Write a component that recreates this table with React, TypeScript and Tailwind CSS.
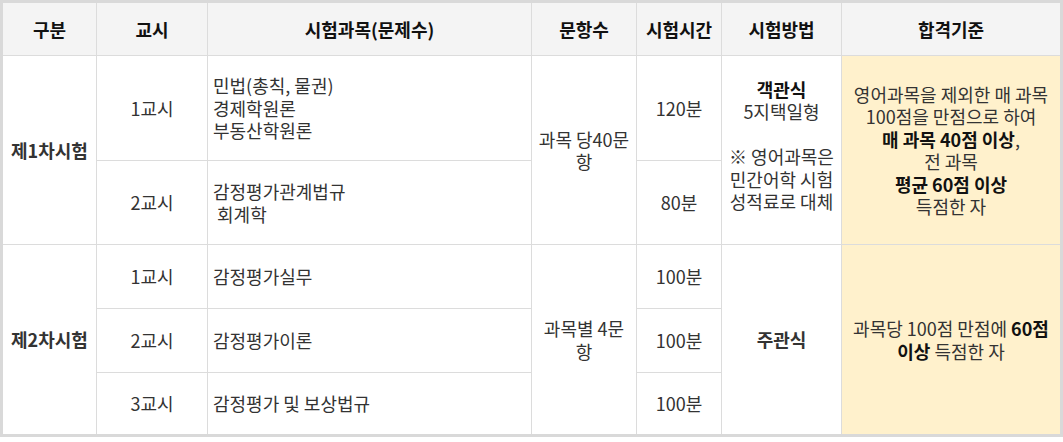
import React from "react";

const font = { fontFamily: '"Noto Sans CJK KR", "Noto Sans", sans-serif' };

const th = "border border-[#dcdcdc] bg-[#f4f4f4] font-bold text-[#111] text-center align-middle";
const td = "border border-[#dcdcdc] px-[5px] align-middle text-[#333]";

const App = () => {
  return (
    <div className="bg-white w-[1063px] h-[442px]" style={font}>
      <table className="table-fixed border-collapse border-[3px] border-[#d9d9d9] w-[1060px] text-[18px] leading-[22.5px]">
        <colgroup>
          <col className="w-[95px]" />
          <col className="w-[111px]" />
          <col className="w-[324px]" />
          <col className="w-[105px]" />
          <col className="w-[85px]" />
          <col className="w-[120px]" />
          <col className="w-[220px]" />
        </colgroup>
        <thead>
          <tr className="h-[54px]">
            <th className={th}>구분</th>
            <th className={th}>교시</th>
            <th className={th}>시험과목(문제수)</th>
            <th className={th}>문항수</th>
            <th className={th}>시험시간</th>
            <th className={th}>시험방법</th>
            <th className={th}>합격기준</th>
          </tr>
        </thead>
        <tbody>
          {/* 제1차시험 */}
          <tr className="h-[105px]">
            <td rowSpan={2} className={`${td} text-center font-bold text-[#111] whitespace-nowrap`}>
              제1차시험
            </td>
            <td className={`${td} text-center`}>1교시</td>
            <td className={td}>
              민법(총칙, 물권)
              <br />
              경제학원론
              <br />
              부동산학원론
            </td>
            <td rowSpan={2} className={`${td} text-center whitespace-nowrap px-0`}>
              과목 당40문
              <br />항
            </td>
            <td className={`${td} text-center`}>120분</td>
            <td rowSpan={2} className={`${td} text-center whitespace-nowrap px-0 pb-[10px]`}>
              <b className="text-[#111]">객관식</b>
              <br />
              5지택일형
              <br />
              <br />
              ※ 영어과목은
              <br />
              민간어학 시험
              <br />
              성적료로 대체
            </td>
            <td rowSpan={2} className={`${td} text-center whitespace-nowrap bg-[#fff1cc] px-0`}>
              영어과목을 제외한 매 과목
              <br />
              100점을 만점으로 하여
              <br />
              <b className="text-[#111]">매 과목 40점 이상</b>,
              <br />
              전 과목
              <br />
              <b className="text-[#111]">평균 60점 이상</b>
              <br />
              득점한 자
            </td>
          </tr>
          <tr className="h-[84px]">
            <td className={`${td} text-center`}>2교시</td>
            <td className={td}>
              감정평가관계법규
              <br />
              &nbsp;회계학
            </td>
            <td className={`${td} text-center`}>80분</td>
          </tr>

          {/* 제2차시험 */}
          <tr className="h-[64px]">
            <td rowSpan={3} className={`${td} text-center font-bold text-[#111] whitespace-nowrap`}>
              제2차시험
            </td>
            <td className={`${td} text-center`}>1교시</td>
            <td className={td}>감정평가실무</td>
            <td rowSpan={3} className={`${td} text-center whitespace-nowrap px-0`}>
              과목별 4문
              <br />항
            </td>
            <td className={`${td} text-center`}>100분</td>
            <td rowSpan={3} className={`${td} text-center font-bold text-[#111]`}>
              주관식
            </td>
            <td rowSpan={3} className={`${td} text-center whitespace-nowrap bg-[#fff1cc] px-0`}>
              과목당 100점 만점에 <b className="text-[#111]">60점</b>
              <br />
              <b className="text-[#111]">이상</b> 득점한 자
            </td>
          </tr>
          <tr className="h-[64px]">
            <td className={`${td} text-center`}>2교시</td>
            <td className={td}>감정평가이론</td>
            <td className={`${td} text-center`}>100분</td>
          </tr>
          <tr className="h-[63px]">
            <td className={`${td} text-center`}>3교시</td>
            <td className={td}>감정평가 및 보상법규</td>
            <td className={`${td} text-center`}>100분</td>
          </tr>
        </tbody>
      </table>
    </div>
  );
};

export default App;
